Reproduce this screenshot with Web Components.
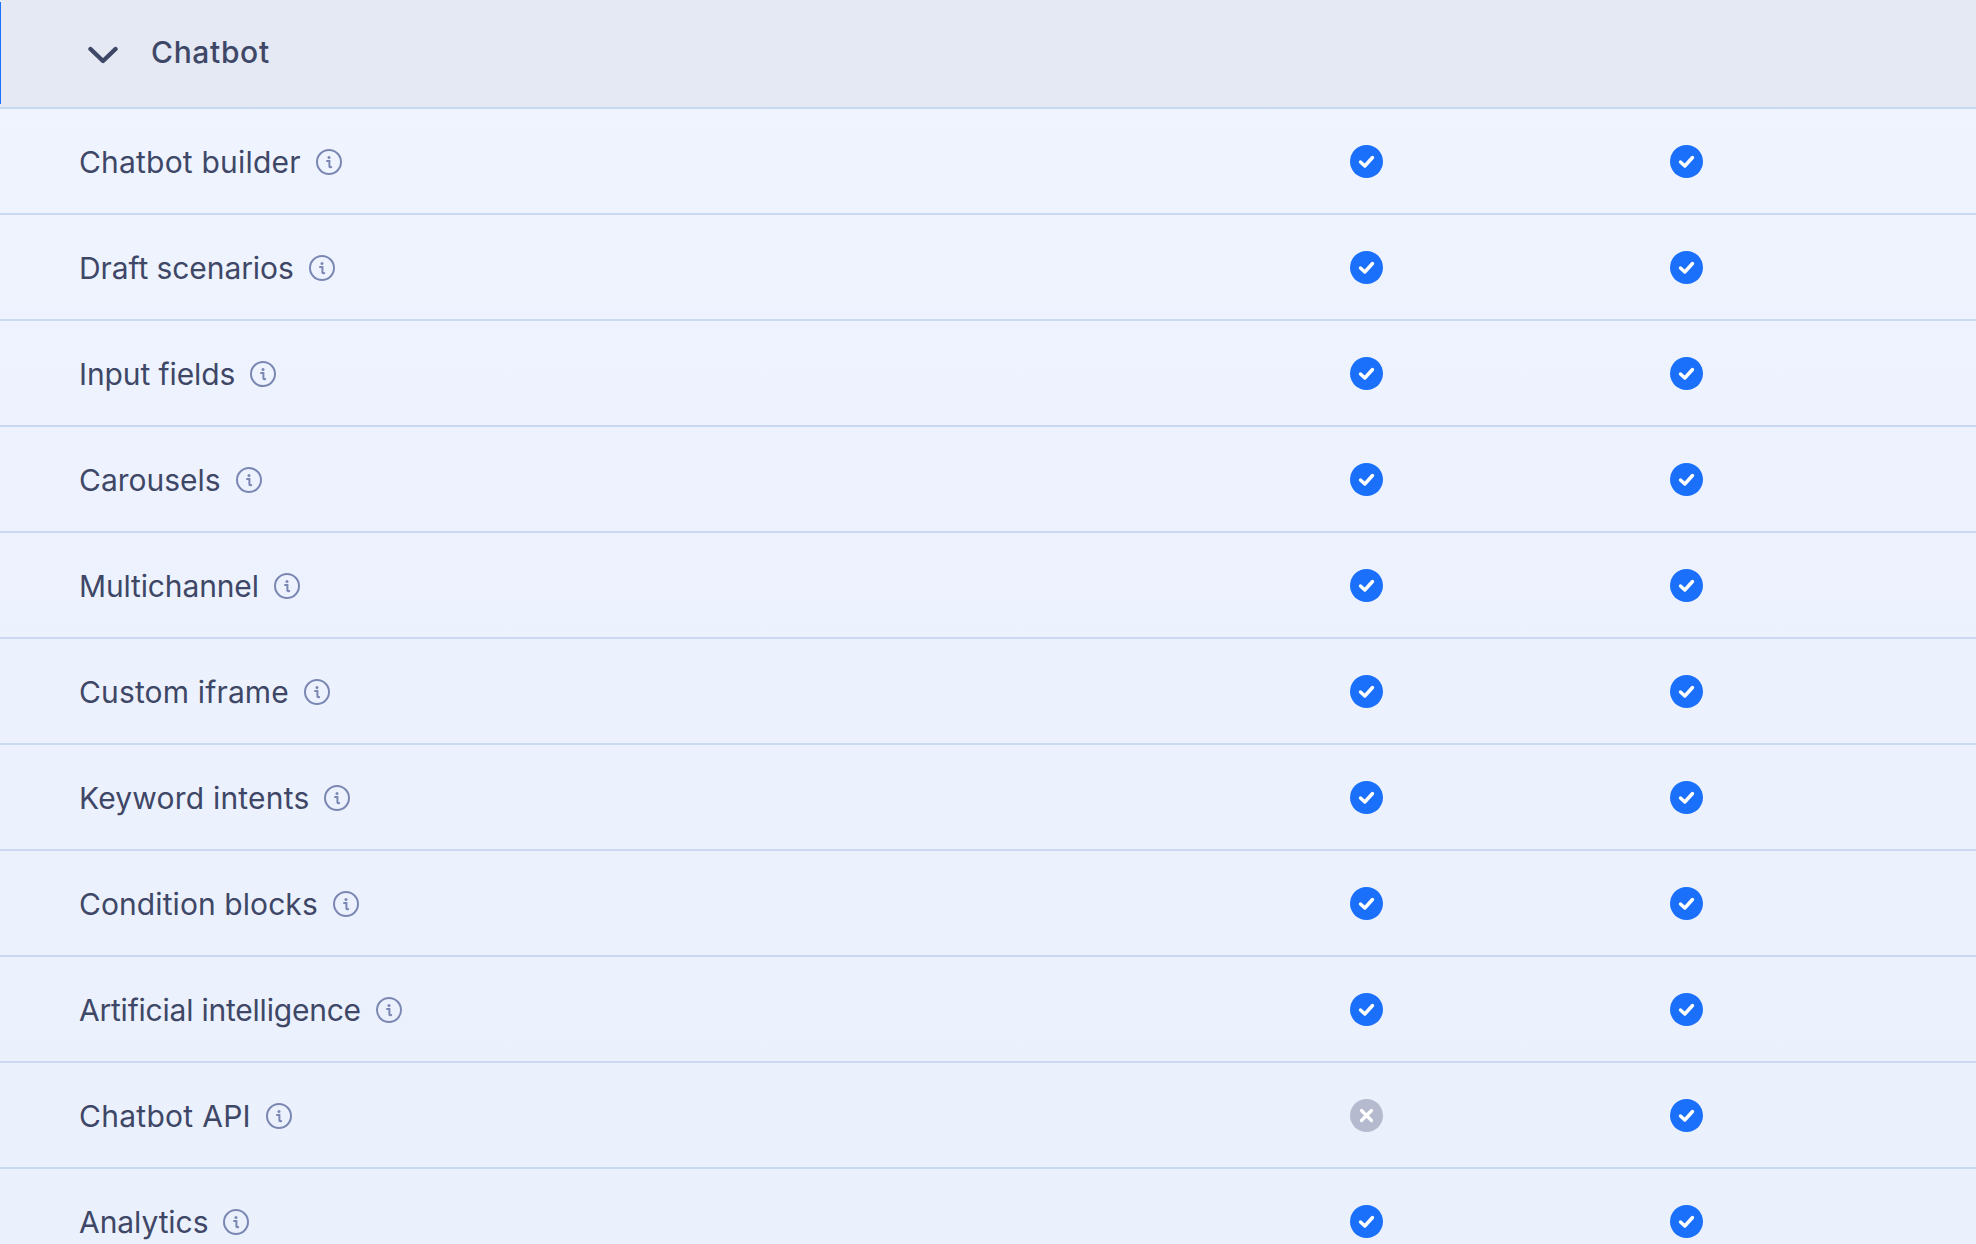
<!DOCTYPE html>
<html lang="en">
<head>
<meta charset="utf-8">
<title>Chatbot</title>
<style>
    html, body { margin: 0; height: 100%; overflow: hidden; background: #ebf1fd; }
</style>
</head>
<body>
<feature-table>
    <feature-group name="Chatbot"></feature-group>
    <feature-row name="Chatbot builder" tracking="0.2"></feature-row>
    <feature-row name="Draft scenarios" tracking="-0.09"></feature-row>
    <feature-row name="Input fields" tracking="-0.1"></feature-row>
    <feature-row name="Carousels"></feature-row>
    <feature-row name="Multichannel" tracking="-0.15"></feature-row>
    <feature-row name="Custom iframe" tracking="0.15"></feature-row>
    <feature-row name="Keyword intents" tracking="0.2"></feature-row>
    <feature-row name="Condition blocks" tracking="0.08"></feature-row>
    <feature-row name="Artificial intelligence" tracking="-0.22"></feature-row>
    <feature-row name="Chatbot API" tracking="0.28" first="no"></feature-row>
    <feature-row name="Analytics" tracking="-0.07"></feature-row>
</feature-table>

<script>
class FeatureTable extends HTMLElement {
    constructor() {
        super();
        this.attachShadow({ mode: 'open' });
        this.shadowRoot.innerHTML = `
            <style>
                :host {
                    display: flex;
                    flex-direction: column;
                    height: 1244px;
                    overflow: hidden;
                    background: linear-gradient(#eff4ff, #eaf0fc);
                    font-family: Inter, 'Noto Sans', sans-serif;
                    color: #3f4767;
                }
            </style>
            <slot></slot>
        `;
    }
}

class FeatureGroup extends HTMLElement {
    constructor() {
        super();
        this.attachShadow({ mode: 'open' });
    }

    connectedCallback() {
        const name = this.getAttribute('name') || '';
        this.shadowRoot.innerHTML = `
            <style>
                :host {
                    display: flex;
                    flex: none;
                    position: relative;
                    align-items: center;
                    box-sizing: border-box;
                    height: 109px;
                    padding: 0 0 4px 88px;
                    gap: 33px;
                    background: #e4e9f4;
                    border-bottom: 2px solid #c8d9f1;
                    font-size: 30px;
                    font-weight: 500;
                    letter-spacing: 0.65px;
                }
                /* Marca azul del grupo activo */
                :host::before {
                    content: '';
                    position: absolute;
                    left: 0;
                    top: 2px;
                    bottom: 3px;
                    width: 1px;
                    background: #1a6ffb;
                }
                svg { display: block; width: 30px; height: 20px; margin-top: 6px; }
            </style>
            <svg viewBox="0 0 30 20" fill="none" stroke="#3f4767" stroke-width="4.4" stroke-linecap="round" stroke-linejoin="round">
                <path d="M2.5 4 L15 16 L27.5 4"/>
            </svg>
            <span>${name}</span>
        `;
    }
}

class FeatureRow extends HTMLElement {
    constructor() {
        super();
        this.attachShadow({ mode: 'open' });
    }

    connectedCallback() {
        const name = this.getAttribute('name') || '';
        const tracking = this.getAttribute('tracking') || '0';
        const first = this.getAttribute('first') !== 'no';
        const second = this.getAttribute('second') !== 'no';
        this.shadowRoot.innerHTML = `
            <style>
                :host {
                    display: grid;
                    grid-template-columns: 1271px 320px 1fr;
                    flex: none;
                    align-items: center;
                    box-sizing: border-box;
                    height: 106px;
                    padding: 2px 0 0 79px;
                    border-bottom: 2px solid #c8d9f1;
                    font-size: 30px;
                }
                .label { display: flex; align-items: center; gap: 15px; }
                .label span { letter-spacing: ${tracking}px; }
                .mark { display: block; width: 33px; height: 33px; margin-bottom: 1px; }
                .info { display: block; width: 26px; height: 26px; }
            </style>
            <div class="label">
                <span>${name}</span>
                <svg class="info" viewBox="0 0 26 26" fill="none">
                    <circle cx="13" cy="13" r="12" stroke="#7b87b3" stroke-width="2"/>
                    <circle cx="13" cy="8.4" r="1.5" fill="#7b87b3"/>
                    <path d="M11 12 H13.4 V17.4 Q13.4 18.6 15.2 18" stroke="#7b87b3" stroke-width="2" stroke-linecap="round"/>
                </svg>
            </div>
            ${this.mark(first)}
            ${this.mark(second)}
        `;
    }

    /** Devuelve el icono de incluido o no incluido */
    mark(included) {
        if (included) {
            return `<svg class="mark" viewBox="0 0 33 33" fill="none">
                <circle cx="16.5" cy="16.5" r="16.5" fill="#1a6ffb"/>
                <path d="M10.5 17 L14.8 21 L22.5 12.5" stroke="#fff" stroke-width="3.4" stroke-linecap="round" stroke-linejoin="round"/>
            </svg>`;
        }
        return `<svg class="mark" viewBox="0 0 33 33" fill="none">
            <circle cx="16.5" cy="16.5" r="16.5" fill="#b5bace"/>
            <path d="M11.5 11.5 L21.5 21.5 M21.5 11.5 L11.5 21.5" stroke="#fff" stroke-width="3.2" stroke-linecap="round"/>
        </svg>`;
    }
}

customElements.define('feature-table', FeatureTable);
customElements.define('feature-group', FeatureGroup);
customElements.define('feature-row', FeatureRow);
</script>
</body>
</html>
